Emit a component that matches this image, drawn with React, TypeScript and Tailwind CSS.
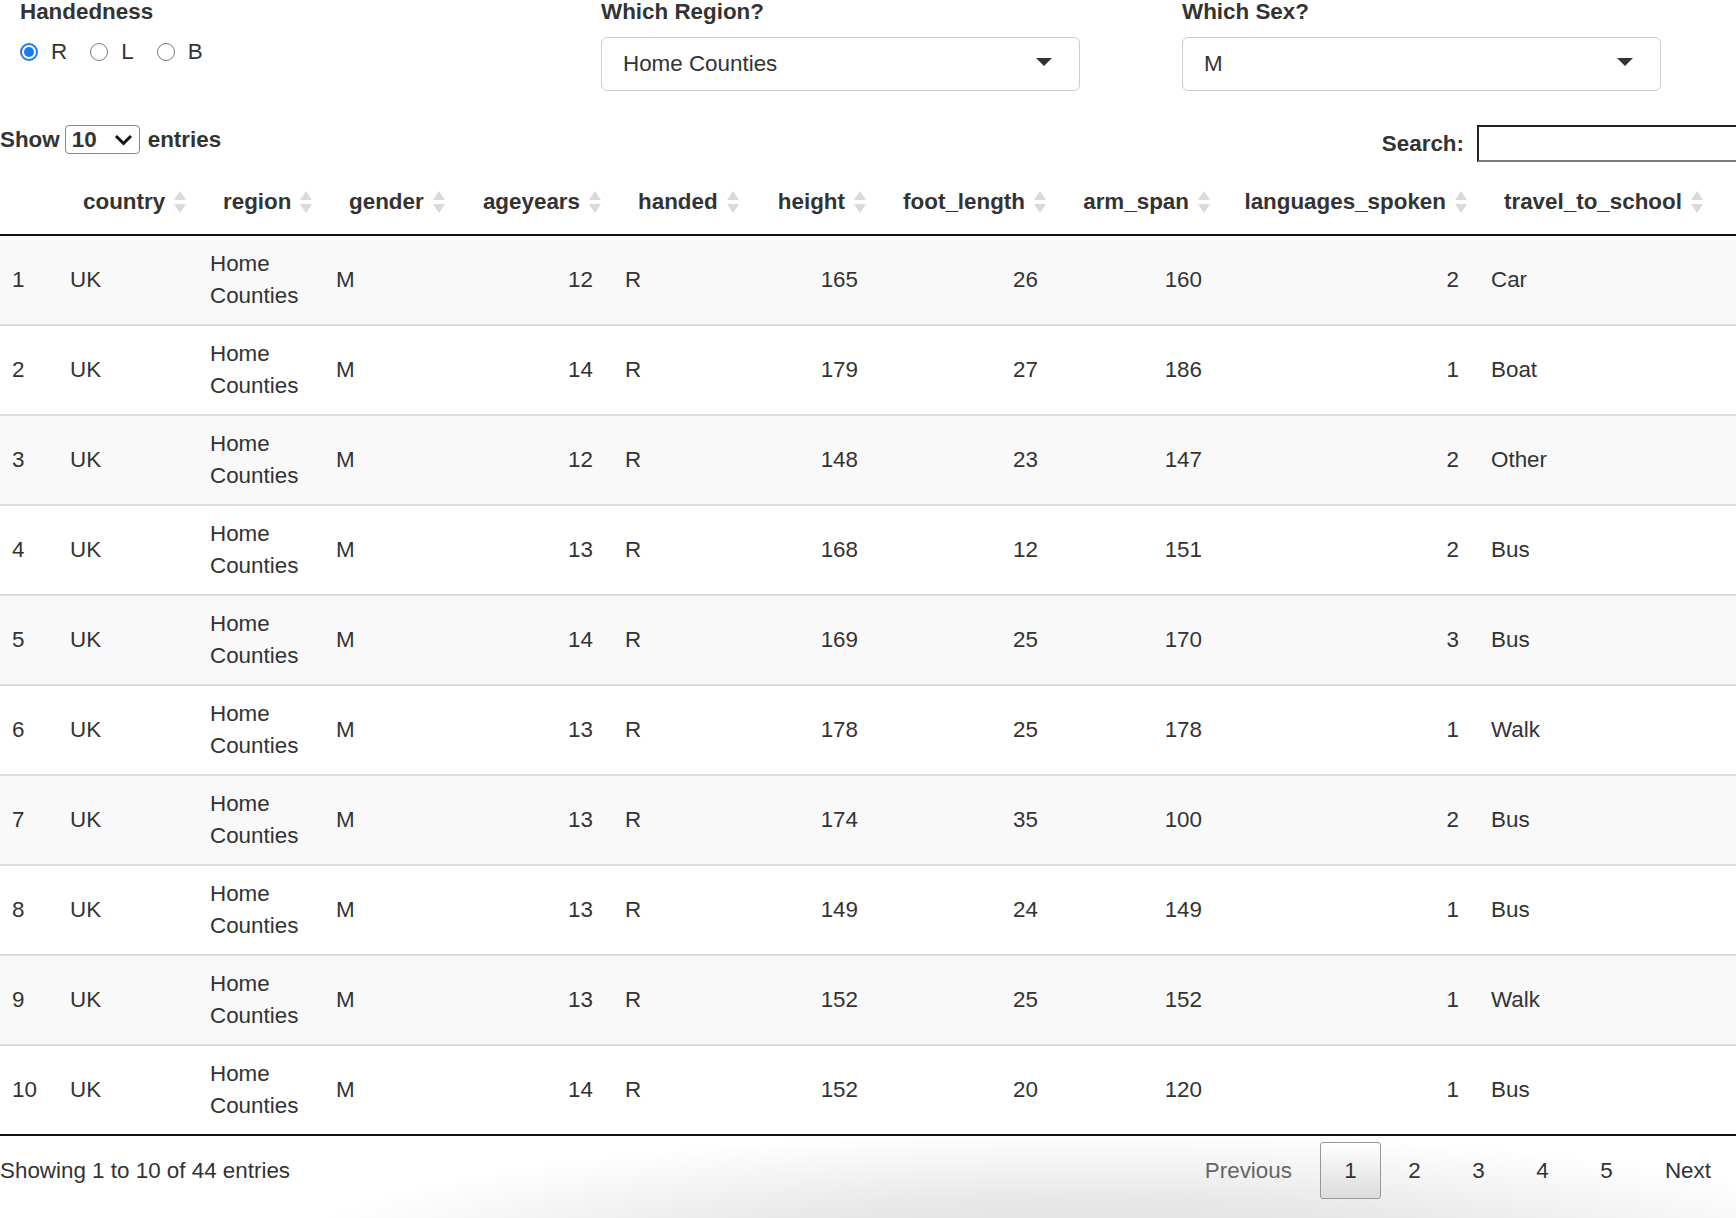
import React from "react";

type Col = { key: string; label: string; width: number; right?: boolean };

const cols: Col[] = [
  { key: "idx", label: "", width: 58 },
  { key: "country", label: "country", width: 140 },
  { key: "region", label: "region", width: 126 },
  { key: "gender", label: "gender", width: 133 },
  { key: "ageyears", label: "ageyears", width: 156, right: true },
  { key: "handed", label: "handed", width: 139 },
  { key: "height", label: "height", width: 126, right: true },
  { key: "foot_length", label: "foot_length", width: 180, right: true },
  { key: "arm_span", label: "arm_span", width: 164, right: true },
  { key: "languages_spoken", label: "languages_spoken", width: 257, right: true },
  { key: "travel_to_school", label: "travel_to_school", width: 261 },
];

// idx, age, height, foot, arm, languages, travel
const data: [number, number, number, number, number, number, string][] = [
  [1, 12, 165, 26, 160, 2, "Car"],
  [2, 14, 179, 27, 186, 1, "Boat"],
  [3, 12, 148, 23, 147, 2, "Other"],
  [4, 13, 168, 12, 151, 2, "Bus"],
  [5, 14, 169, 25, 170, 3, "Bus"],
  [6, 13, 178, 25, 178, 1, "Walk"],
  [7, 13, 174, 35, 100, 2, "Bus"],
  [8, 13, 149, 24, 149, 1, "Bus"],
  [9, 13, 152, 25, 152, 1, "Walk"],
  [10, 14, 152, 20, 120, 1, "Bus"],
];

function SortIcon() {
  return (
    <svg width="12" height="22" viewBox="0 0 12 22" className="ml-[9px] inline-block align-middle">
      <path d="M6 0 L12 9 L0 9 Z" fill="#dadada" />
      <path d="M0 13 L12 13 L6 22 Z" fill="#dadada" />
    </svg>
  );
}

function Caret() {
  return <span className="h-0 w-0 border-x-[8px] border-t-[8px] border-x-transparent border-t-[#333]" />;
}

function Radio({ checked, label }: { checked?: boolean; label: string }) {
  return (
    <label className="flex items-center">
      {checked ? (
        <span className="flex h-[18px] w-[18px] items-center justify-center rounded-full border-2 border-[#1a7cf5] bg-white">
          <span className="h-[10px] w-[10px] rounded-full bg-[#1a7cf5]" />
        </span>
      ) : (
        <span className="h-[18px] w-[18px] rounded-full border-[1.5px] border-[#7a7a7a] bg-white" />
      )}
      <span className="ml-[13px]">{label}</span>
    </label>
  );
}

function SelectBox({ value }: { value: string }) {
  return (
    <div className="flex h-[54px] w-[479px] items-center justify-between rounded-[6px] border border-[#cccccc] bg-white pl-[21px] pr-[27px]">
      <span>{value}</span>
      <span className="-mt-[4px] flex">
        <Caret />
      </span>
    </div>
  );
}

export default function App() {
  return (
    <div className="relative h-[1218px] w-[1736px] overflow-hidden bg-white font-['Liberation_Sans',Arial,sans-serif] text-[22.4px] leading-[32px] text-[#333]">
      {/* inputs */}
      <div className="-mt-[4px] flex pl-[20px]">
        <div className="w-[581px] shrink-0">
          <div className="mb-[8px] font-bold">Handedness</div>
          <div className="flex h-[32px] items-center gap-[23px]">
            <Radio checked label="R" />
            <Radio label="L" />
            <Radio label="B" />
          </div>
        </div>
        <div className="w-[581px] shrink-0">
          <div className="mb-[9px] font-bold">Which Region?</div>
          <SelectBox value="Home Counties" />
        </div>
        <div className="w-[581px] shrink-0">
          <div className="mb-[9px] font-bold">Which Sex?</div>
          <SelectBox value="M" />
        </div>
      </div>

      {/* datatable wrapper */}
      <div className="-ml-[4px] w-[1740px]">
        <div className="mt-[34px] flex items-start">
          <div className="ml-[4px] flex h-[29px] items-center font-bold">
            <span>Show</span>
            <div className="ml-[5px] flex h-[29px] w-[75px] items-center justify-between rounded-[4px] border border-[#8a8a8a] pl-[6px] pr-[6px]">
              <span>10</span>
              <svg width="19" height="12" viewBox="0 0 19 12">
                <polyline points="2,2 9.5,9.5 17,2" fill="none" stroke="#111" strokeWidth="3" />
              </svg>
            </div>
            <span className="ml-[8px]">entries</span>
          </div>
          <div className="ml-auto -mr-[4px] flex h-[37px] items-center">
            <span className="font-bold">Search:</span>
            <div className="ml-[13px] h-[37px] w-[263px] border-2 border-b-[#7a7a7a] border-l-[#222] border-r-[#7a7a7a] border-t-[#222] bg-white" />
          </div>
        </div>

        <table className="mt-[7px] w-[1740px] table-fixed border-separate border-spacing-0">
          <colgroup>
            {cols.map((c) => (
              <col key={c.key} style={{ width: c.width }} />
            ))}
          </colgroup>
          <thead>
            <tr>
              {cols.map((c) => (
                <th
                  key={c.key}
                  className={
                    "whitespace-nowrap border-b-2 border-[#111] py-[16px] font-bold " +
                    (c.right ? "pr-[8px] text-right" : "pl-[29px] pr-[8px] text-left")
                  }
                >
                  {c.label && (
                    <>
                      <span className="align-middle">{c.label}</span>
                      <SortIcon />
                    </>
                  )}
                </th>
              ))}
            </tr>
          </thead>
          <tbody>
            {data.map((r, i) => {
              const [idx, age, height, foot, arm, lang, travel] = r;
              const cells: (string | number)[] = [idx, "UK", "Home Counties", "M", age, "R", height, foot, arm, lang, travel];
              return (
                <tr key={idx} className={i % 2 === 0 ? "bg-[#f9f9f9]" : "bg-white"}>
                  {cells.map((v, j) => (
                    <td
                      key={j}
                      className={
                        "px-[16px] py-[12px] align-middle " +
                        (cols[j].right ? "text-right " : "text-left ") +
                        (i > 0 ? "border-t-2 border-t-[#dddddd] " : "") +
                        (i === data.length - 1 ? "border-b-2 border-b-[#111]" : "")
                      }
                    >
                      {v}
                    </td>
                  ))}
                </tr>
              );
            })}
          </tbody>
        </table>

        <div className="flex h-[83px] items-start bg-[radial-gradient(820px_130px_at_63%_150%,#dcdcdc_0%,#e9e9e9_50%,#ffffff_100%)] pt-[6px]">
          <div className="ml-[4px] flex h-[57px] items-center">Showing 1 to 10 of 44 entries</div>
          <div className="ml-auto flex h-[57px] items-center">
            <span className="flex h-[57px] items-center border border-transparent px-[24px] text-[#666]">Previous</span>
            <span className="ml-[3px] flex h-[57px] w-[61px] items-center justify-center rounded-[3px] border border-[#979797] bg-gradient-to-b from-white to-[#dcdcdc]">
              1
            </span>
            {["2", "3", "4", "5"].map((p) => (
              <span key={p} className="ml-[3px] flex h-[57px] w-[61px] items-center justify-center border border-transparent">
                {p}
              </span>
            ))}
            <span className="ml-[3px] flex h-[57px] items-center border border-transparent px-[24px]">Next</span>
          </div>
        </div>
      </div>
    </div>
  );
}
